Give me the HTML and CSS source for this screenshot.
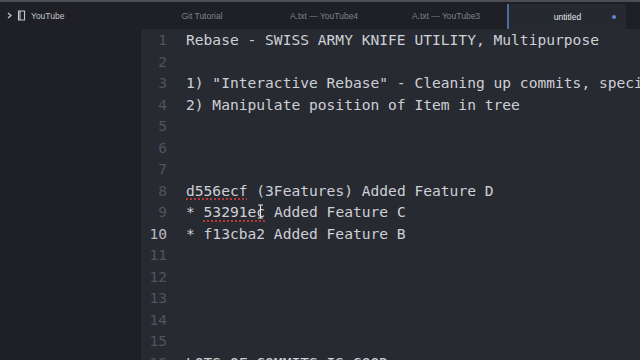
FILE: index.html
```html
<!DOCTYPE html>
<html>
<head>
<meta charset="utf-8">
<link rel="stylesheet" href="styles.css">
</head>
<body>
<div class="app">
  <aside class="sidebar">
    <div class="tree-head">
      <svg class="chev" width="5" height="7" viewBox="0 0 5 7"><path d="M1 1l3 2.5L1 6" fill="none" stroke="#c4c6cc" stroke-width="1.3"/></svg>
      <svg class="book" width="9" height="11" viewBox="0 0 9 11"><path d="M1.5 1h6v9h-6z M3 1v9" fill="none" stroke="#c4c6cc" stroke-width="1.1"/></svg>
      <span class="proj">YouTube</span>
    </div>
  </aside>
  <main class="main">
    <nav class="tabs">
      <div class="tab">Git Tutorial</div>
      <div class="tab">A.txt — YouTube4</div>
      <div class="tab">A.txt — YouTube3</div>
      <div class="tab active">untitled<span class="dot"></span></div>
    </nav>
    <section class="editor">
      <div class="gutter">
        <div>1</div><div>2</div><div>3</div><div>4</div><div>5</div><div>6</div><div>7</div><div>8</div><div>9</div><div class="cur">10</div><div>11</div><div>12</div><div>13</div><div>14</div><div>15</div><div>16</div>
      </div>
      <div class="code">
        <div class="ln">Rebase - SWISS ARMY KNIFE UTILITY, Multipurpose</div>
        <div class="ln"></div>
        <div class="ln">1) "Interactive Rebase" - Cleaning up commits, specifically</div>
        <div class="ln">2) Manipulate position of Item in tree</div>
        <div class="ln"></div>
        <div class="ln"></div>
        <div class="ln"></div>
        <div class="ln"><span class="spell">d556ecf</span> (3Features) Added Feature D</div>
        <div class="ln">* <span class="spell">53291ec</span> Added Feature C</div>
        <div class="ln">* f13cba2 Added Feature B</div>
        <div class="ln"></div>
        <div class="ln"></div>
        <div class="ln"></div>
        <div class="ln"></div>
        <div class="ln"></div>
        <div class="ln">LOTS OF COMMITS IS GOOD</div>
      </div>
      <svg class="ibeam" width="7" height="15" viewBox="0 0 7 15"><path d="M1 1h2l.5.5L4 1h2M3.5 1.5v12M1 14h2l.5-.5.5.5h2" fill="none" stroke="#e8e8e8" stroke-width="1.1"/></svg>
    </section>
  </main>
</div>
</body>
</html>
```

FILE: styles.css
```css
html, body {
  margin: 0;
  padding: 0;
  width: 640px;
  height: 360px;
  overflow: hidden;
  background: #1f2127;
}
.app {
  display: flex;
  height: 358px;
  border-top: 2px solid #4b4d53;
}
.sidebar {
  width: 141px;
  flex: none;
  background: #1e2026;
}
.tree-head {
  display: flex;
  align-items: center;
  height: 27px;
  padding-left: 7px;
  gap: 5px;
  font-family: "Liberation Sans", Arial, sans-serif;
  font-size: 8.5px;
  color: #c4c6cc;
}
.main {
  flex: 1;
  display: flex;
  flex-direction: column;
  min-width: 0;
}
.tabs {
  display: flex;
  height: 27px;
  flex: none;
  background: #1e2026;
  font-family: "Liberation Sans", Arial, sans-serif;
  font-size: 8.5px;
  color: #7e828b;
}
.tab {
  width: 122px;
  flex: none;
  display: flex;
  align-items: center;
  justify-content: center;
  position: relative;
}
.tab.active {
  background: #262930;
  color: #e4e6ea;
  border-left: 2px solid #4a6aa8;
  width: 117px;
  margin-top: 2px;
  border-top-right-radius: 2px;
}
.dot {
  position: absolute;
  right: 10px;
  top: 11px;
  width: 4px;
  height: 4px;
  border-radius: 50%;
  background: #5d86d6;
}
.editor {
  flex: 1;
  display: flex;
  background: #282a32;
  position: relative;
  font-family: "DejaVu Sans Mono", "Liberation Mono", monospace;
  font-size: 14.6px;
  line-height: 21.5px;
  overflow: hidden;
}
.gutter {
  width: 26px;
  padding-right: 19px;
  text-align: right;
  color: #50545d;
  flex: none;
}
.gutter .cur { color: #b8bbc1; }
.code {
  color: #cdd0d5;
}
.ln {
  height: 21.5px;
  white-space: pre;
}
.spell {
  text-decoration: underline dotted #b8383a;
  text-decoration-thickness: 1.5px;
  text-underline-offset: 3px;
}
.ibeam {
  position: absolute;
  left: 116px;
  top: 175px;
}
```
